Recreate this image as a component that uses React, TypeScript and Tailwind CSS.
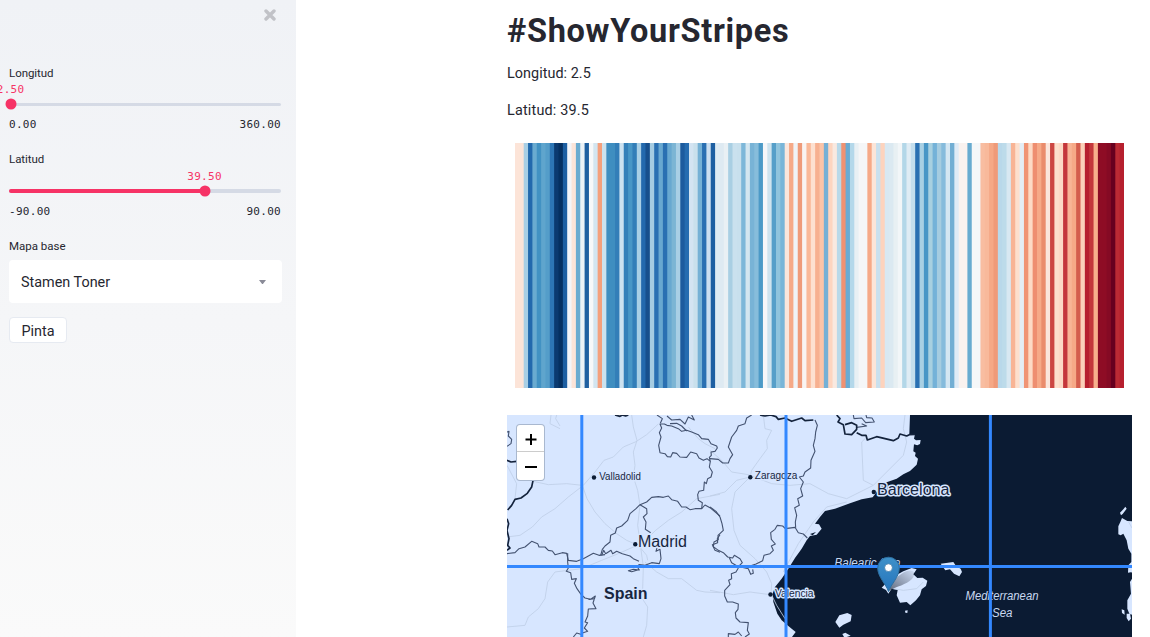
import React from "react";

const STRIPES =
  "fce4d8 fce4d8 a9cfe5 2369ad 6aabd0 4292c3 5fa5cd 549dc9 2d76b5 0b3a70 053061 1d5fa2 f3f5f9 fce4d8 6aabd0 ecf2f6 1f5fa0 f7f8f9 d3e5f0 f4a07c cce2ee 3f8ec0 3f8ec0 337eb8 cce2f0 3480b9 4896c6 337eb8 a9cfe5 2369ad 174f8c a5cce2 2a70b2 68a8d0 2a70b2 68a8d0 7cb5d4 a9cfe5 1d5b9e 266cb0 d3e4f2 c9e0ec 75b1d5 2a70b2 cbdff0 1d5fa2 deebf3 deeaf2 e9f0f4 a9cfe3 cae1ee c8e0ed 7db7d9 d3e6f0 78b3d6 87bddb 4c9ac7 f7f7f9 cfe4ef 569fc9 90c4dd 79b5d8 fbe6dc f6a987 f0f3f6 ef9b7a f9f4f2 fab999 fde0d0 f7b090 fbc4a8 74b0d6 fdd5c0 f9e9e0 b9d9e9 ef9272 68abd3 b4d8ea e8f0f4 f5f6f7 f5f6f7 f6a987 fce5d8 c9e0ee fdd3bd d8e8f2 dbe9f1 e8f0f3 f2f6f8 b3d7e8 dfecf4 c4deed 2a70b2 a8d0e4 4896c6 a8d0e0 74b2d8 a5cce0 85bbdc d3e6f2 72aed3 dfebf6 f9f2ef f9f2ef 67abd0 f5f7f8 f4f7f9 f8bda1 f8b99b f5a886 ef9a79 b9d8ea bddbea d8e8f2 f8b495 fddfcd e4eef6 f09475 fddac5 ee8e70 f6a987 ea8c6c fbe5db cc4742 fde0cc fddac5 c4373b f8b495 f6a987 d45d4d fbd0b9 b61f2e c4373b f8b08c 8e0c25 8e0c25 850a24 67001f bb2a34 b61f2e".split(
    " ",
  );

function Stripes() {
  const w = 609 / STRIPES.length;
  return (
    <svg className="ml-2 block h-[245px] w-[609px]" viewBox="0 0 609 245">
      {STRIPES.map((c, i) => (
        <rect key={i} x={i * w} y={0} width={609 - i * w} height={245} fill={"#" + c} />
      ))}
    </svg>
  );
}

type SliderProps = { label: string; value: string; min: string; max: string; pct: number };

function Slider({ label, value, min, max, pct }: SliderProps) {
  return (
    <div className="flex h-[86.5px] w-[272px] flex-col">
      <div className="text-[11.5px] leading-[17px] tracking-[-0.05px]">{label}</div>
      <div className="relative mt-[21px] h-[3.5px] rounded-full bg-[#d5dae5]">
        <div className="h-full rounded-full bg-[#f63366]" style={{ width: `${pct}%` }} />
        <div
          className="absolute top-1/2 size-[11px] -translate-x-1/2 -translate-y-1/2 rounded-full bg-[#f63366]"
          style={{ left: `${pct}%` }}
        />
        <div
          className="absolute -top-[20.5px] -translate-x-1/2 font-['DejaVu_Sans_Mono',monospace] text-[11px] leading-[15px] tracking-[0.3px] text-[#f63366]"
          style={{ left: `${pct}%` }}
        >
          {value}
        </div>
      </div>
      <div className="mt-[10px] flex justify-between font-['DejaVu_Sans_Mono',monospace] text-[11px] leading-[17px] tracking-[0.3px]">
        <span>{min}</span>
        <span>{max}</span>
      </div>
    </div>
  );
}

function Sidebar() {
  return (
    <aside className="flex h-full w-[296px] shrink-0 flex-col overflow-hidden bg-linear-to-b from-[#f0f2f6] to-[#fafafa] pl-[9px]">
      <div className="flex h-[64.5px] justify-end pt-[9px] pr-5">
        <svg className="size-3" viewBox="0 0 12 12" stroke="#c1c2c7" strokeWidth="3.4" strokeLinecap="round">
          <path d="M2 2l8 8M10 2l-8 8" />
        </svg>
      </div>
      <Slider label="Longitud" value="2.50" min="0.00" max="360.00" pct={0.6} />
      <Slider label="Latitud" value="39.50" min="-90.00" max="90.00" pct={71.9} />
      <div className="text-[11.5px] leading-[17px]">Mapa base</div>
      <div className="mt-[5.5px] flex h-[43px] w-[273px] items-center justify-between rounded-[4px] bg-white pr-4 pl-3">
        <span className="pt-[2px] text-[14.4px]">Stamen Toner</span>
        <svg className="h-1 w-[7px]" viewBox="0 0 7 4">
          <path d="M0 0h7L4.3 3.4a1 1 0 0 1-1.6 0z" fill="#8a8b98" />
        </svg>
      </div>
      <button className="mt-[14px] h-[26px] w-[58px] rounded-[4px] border border-[#e6eaf1] bg-white pt-[3px] text-[14.4px] leading-[21px]">
        Pinta
      </button>
    </aside>
  );
}

const BORDERS_WEST = [
  "M465 36L470 48 463 62 468 75 461 100 465 122 480 125 487 134 497 135 503 122 515 124 525 135 545 136 557 120 575 125 582 138 595 145 606 140 616 148 613 136 619 130 618 120 630 118 637 108 635 102 618 95 610 82 590 80 580 68 560 60 545 55 530 58 520 50 500 42 486 40 478 36Z",
  "M616 148L613 165 622 180 618 195 608 200 604 215 598 210 596 235 582 238 578 248 580 265 592 272 590 290 570 290 555 293 543 285 530 285 518 268 500 263 490 252 475 256 460 254 440 256 425 270 405 278 393 290 375 305 368 325 350 342 335 348 331 363 317 370 315 390 300 402 292 412 287 430",
  "M590 290L600 279 615 287 645 312M405 278L425 290 426 305 415 315 423 330 421 352 437 362",
  "M456 407L453 418 465 412 468 440 463 455 440 452 420 460 402 458 397 465 403 474 385 472 370 476 380 479 398 474M402 448L385 440 375 432 352 425 335 418 323 425 318 415 302 425 296 415 290 430",
  "M6 425L30 422 42 410 60 405 80 388 98 395 102 405 120 405 130 415 142 417 150 428 172 422 185 424 190 445 215 448 235 440 250 432 265 424 282 430 300 428",
  "M188 424L188 450 190 468 184 478 197 482 200 502 214 500 208 514 216 530 228 547 240 558 256 562 271 552 264 573 273 590 250 591 248 612 240 630 248 632 238 648 248 658 230 664 232 675M205 675L215 663 232 668M270 560L250 562",
  "M6 60L12 58 10 72 20 82 18 95 6 103M456 9L472 20 466 34M486 12L500 24 525 22 540 36 550 15 568 24 560 9M495 35L515 34 530 42 545 57",
  "M645 368L637 380 638 392 622 398 630 415 645 421",
];
const BORDERS_EAST = [
  "M125 9L110 18 105 35 85 42 80 55 65 75 55 105 68 128 60 140 55 153 38 153 25 142 0 140",
  "M315 24L322 40 317 60 315 80 310 100 315 118 303 145 302 168 285 180 280 192 268 195 280 210 272 230 278 252 263 260 268 280 254 287 260 310 256 330 257 347",
  "M0 285L18 298 30 315 36 335 40 355 24 370 25 383 12 390 10 404 25 415 40 422 53 435 68 438 73 430 90 440 97 452 85 464 65 452 58 437",
  "M95 466L115 470 122 487 130 484 128 472M120 462L138 456 158 446 162 430 180 425 190 415 184 402 196 396 184 382 182 362 195 352 202 340 218 342 226 350 255 346 265 362 280 366 292 378",
  "M85 468L78 480 64 485 65 500 56 505 60 518 44 535 44 552 52 570 68 570 85 576 84 592 76 602 78 618 90 630 115 632 112 655 118 666 105 675M55 675L55 665 75 667 85 660 95 672",
  "M430 9L432 20 455 18 467 32 493 30 486 18 470 17 468 9M440 46L470 42 455 35",
];
const ROADS_WEST = [
  "M460 36L425 68 393 89 355 105 325 135 297 145 270 180 235 220 190 255 150 290 110 315 82 345 45 370 6 375",
  "M80 207L130 218 185 215 232 220 246 260 270 300 300 335 335 365 365 385 400 400 425 430 428 445",
  "M380 9L385 45 396 85 385 120 390 160 385 195 398 235 405 280 398 340 405 390 415 465 412 560 428 585 425 640 415 675",
  "M645 247L575 260 530 300 490 325 452 355 425 382 385 405 340 425 290 445 230 470 150 480 128 510 120 560 100 590 70 615 60 640 6 645",
  "M420 450L455 480 490 500 530 500 575 535 600 540 645 542M6 160L35 215 30 260 15 290M138 9L135 35 165 50M155 9L152 20 165 42M550 45L580 80 600 95 630 110",
];
const ROADS_EAST = [
  "M160 9L165 50 185 55 170 85 172 110 150 140 125 175 120 195 75 240 65 290 72 355 90 400 135 440 170 480 185 515 183 545 200 580 225 620",
  "M0 115L35 145 65 180 115 188 185 215 240 220 300 215 355 245 410 260 460 235 490 220 580 130 590 90 580 50 585 9",
  "M0 252L45 240 80 205 120 195M0 535L70 548 120 540 180 548M490 220L460 205 455 90 475 70M410 270L350 285 310 330 265 395 220 480",
];

function Zoom() {
  return (
    <div className="absolute top-[10px] left-[10px] flex h-[55px] w-[27px] flex-col items-center rounded-[3px] bg-white shadow-[0_0_0_1px_#a9b8cf]">
      <div className="flex h-[27px] w-full items-center justify-center border-b border-[#ccc] pt-[3px]">
        <svg className="h-[11px] w-3" viewBox="0 0 12 11" stroke="#000" strokeWidth="2">
          <path d="M0.5 5.5h11M6 0v11" />
        </svg>
      </div>
      <div className="flex h-7 items-center justify-center pt-0.5">
        <svg className="size-3" viewBox="0 0 12 12" stroke="#000" strokeWidth="2">
          <path d="M0 6h12" />
        </svg>
      </div>
    </div>
  );
}

function BaseMap() {
  return (
    <div className="relative mt-[27px] h-[222px] w-[625px] overflow-hidden bg-[#0b1b33]">
      <svg
        className="block h-[222px] w-[625px] font-['Liberation_Sans',sans-serif]"
        viewBox="507 415 625 222"
        fill="none"
        strokeLinejoin="round"
      >
        <defs>
          <linearGradient id="pin" x1="0" y1="0" x2="0" y2="1">
            <stop offset="0" stopColor="#3f91c9" />
            <stop offset="1" stopColor="#2474bc" />
          </linearGradient>
          <linearGradient id="shade" x1="0" y1="1" x2="1" y2="0">
            <stop offset="0" stopColor="#111827" stopOpacity="0.6" />
            <stop offset="1" stopColor="#111827" stopOpacity="0.05" />
          </linearGradient>
        </defs>
        <g transform="translate(710 412) scale(.333333)">
          <g fill="#d7e6ff">
            <path d="M-609 9H600L598 66 615 66 612 80 618 85 632 84 630 96 622 100 612 97 610 118 617 122 615 132 624 140 620 158 600 177 580 187 560 200 530 211 505 220 500 240 488 256 455 262 420 274 375 290 345 297 330 315 315 335 327 337 335 350 320 368 300 372 290 385 275 410 255 438 235 470 215 500 195 525 188 545 190 570 202 605 215 625 235 642 257 660 246 675H-609Z" />
            <path d="M515 527L525 517 540 512 558 490 580 478 605 468 620 472 610 487 622 498 638 497 652 506 648 522 635 532 630 550 618 565 601 580 590 570 570 572 560 550 563 534 545 530 535 545 528 534Z" />
            <path d="M376 630L388 610 412 603 425 609 422 628 400 638 388 647ZM397 666L406 662 422 671 410 675H402ZM585 596L593 595 592 603 586 602Z" />
            <path d="M692 455L730 450 738 462 752 470 756 480 748 493 732 485 720 472 706 475Z" />
            <path d="M1266 675V328L1252 327 1236 318 1232 328 1225 343 1225 367 1232 370 1240 365 1250 385 1255 410 1264 425V450L1255 460 1254 482 1266 480V500L1260 510 1263 545 1252 565 1252 590 1258 605 1266 608ZM1233 310L1230 302 1240 292 1246 284 1250 290 1238 306ZM1235 592L1243 595 1244 608 1236 603ZM1250 605L1260 605 1263 620 1256 628 1250 618Z" />
          </g>
          <path d="M300 366L318 360 308 370Z" fill="#0b1b33" />
          <g stroke="#bfcfe7" strokeWidth="2.5">
            {ROADS_EAST.map((d) => (
              <path key={d} d={d} />
            ))}
            <path d="M540 528L580 535 620 530 640 510M1256 330L1266 348" />
          </g>
          <g stroke="#435270" strokeWidth="3.3">
            {BORDERS_EAST.map((d) => (
              <path key={d} d={d} />
            ))}
          </g>
          <path
            d="M150 9L165 12 182 9 198 14 205 22 225 18 245 28 275 18 285 26 310 24M380 9L390 20 384 30 400 38 405 66 425 68 440 52 440 40 425 32 405 38M440 62L455 70 468 70 472 84 500 74 525 80 550 86 565 78 570 66 590 72 598 68 615 67"
            stroke="#14233c"
            strokeWidth="5"
          />
        </g>
        <g transform="translate(505 412) scale(.333333)">
          <g stroke="#bfcfe7" strokeWidth="2.5">
            {ROADS_WEST.map((d) => (
              <path key={d} d={d} />
            ))}
          </g>
          <g stroke="#435270" strokeWidth="3.3">
            {BORDERS_WEST.map((d) => (
              <path key={d} d={d} />
            ))}
          </g>
          <path
            d="M6 145L18 150 35 148M84 206L80 225 67 244 48 258 30 262 20 280 8 294M6 320L11 335 6 355 12 380 8 400 15 408 6 415M330 9L345 13 352 9 362 12 370 9"
            stroke="#14233c"
            strokeWidth="5"
          />
        </g>
        <g fill="#0b1b33">
          <circle cx="594" cy="477.5" r="2.2" />
          <circle cx="635.3" cy="544.3" r="2.2" />
          <circle cx="750.3" cy="477.2" r="2.2" />
          <circle cx="873.8" cy="492" r="2.2" />
          <circle cx="770.5" cy="594.5" r="2.2" />
        </g>
        <g fill="#17263f" stroke="#d7e6ff" strokeWidth="3" paintOrder="stroke">
          <text x="599.3" y="479.6" fontSize="10.6" textLength="41.5" lengthAdjust="spacingAndGlyphs">Valladolid</text>
          <text x="754.8" y="479.3" fontSize="10.6" textLength="42.5" lengthAdjust="spacingAndGlyphs">Zaragoza</text>
          <text x="775" y="596.6" fontSize="10.6" textLength="38.5" lengthAdjust="spacingAndGlyphs">Valencia</text>
          <text x="638" y="546.5" fontSize="16" textLength="49" lengthAdjust="spacingAndGlyphs">Madrid</text>
          <text x="877" y="494.8" fontSize="16" textLength="72.5" lengthAdjust="spacingAndGlyphs">Barcelona</text>
          <text x="604" y="598.6" fontSize="16" fontWeight="bold" textLength="43.5" lengthAdjust="spacingAndGlyphs">Spain</text>
        </g>
        <g fill="#c9d8f0" fontSize="12" fontStyle="italic">
          <text x="834.5" y="566.5" textLength="66" lengthAdjust="spacingAndGlyphs">Balearic Sea</text>
          <text x="965.5" y="599.8" textLength="73" lengthAdjust="spacingAndGlyphs">Mediterranean</text>
          <text x="992" y="616.6" textLength="20.5" lengthAdjust="spacingAndGlyphs">Sea</text>
        </g>
        <path d="M581.8 415V637M786 415V637M990.4 415V637M507 566.6H1132" stroke="#3388ff" strokeWidth="3" />
        <path d="M889 591C890 582 899 574 907 571C914 569 917 573 912 579C906 585 897 586 889 591Z" fill="url(#shade)" />
        <path
          d="M888.5 591.5C886 584 877.7 577 877.7 568A10.8 10.8 0 0 1 899.3 568C899.3 577 891 584 888.5 591.5Z"
          fill="url(#pin)"
          stroke="#2e6f9f"
          strokeWidth="1"
        />
        <circle cx="888.5" cy="567.7" r="3.9" fill="#fff" stroke="#2e6f9f" strokeWidth=".7" />
      </svg>
      <Zoom />
    </div>
  );
}

export default function App() {
  return (
    <div className="flex h-[637px] w-[1150px] overflow-hidden bg-white font-['Roboto',sans-serif] text-[#262730]">
      <Sidebar />
      <main className="ml-[211px] flex w-[625px] flex-col">
        <h1 className="h-[50px] pt-[11px] text-[32.5px] leading-10 font-bold tracking-[0.7px]">#ShowYourStripes</h1>
        <p className="mt-3 text-[14.4px] leading-[23px] tracking-[0.04px]">Longitud: 2.5</p>
        <p className="mt-[14px] mb-[21px] text-[14.4px] leading-[23px] tracking-[0.18px]">Latitud: 39.5</p>
        <Stripes />
        <BaseMap />
      </main>
    </div>
  );
}
